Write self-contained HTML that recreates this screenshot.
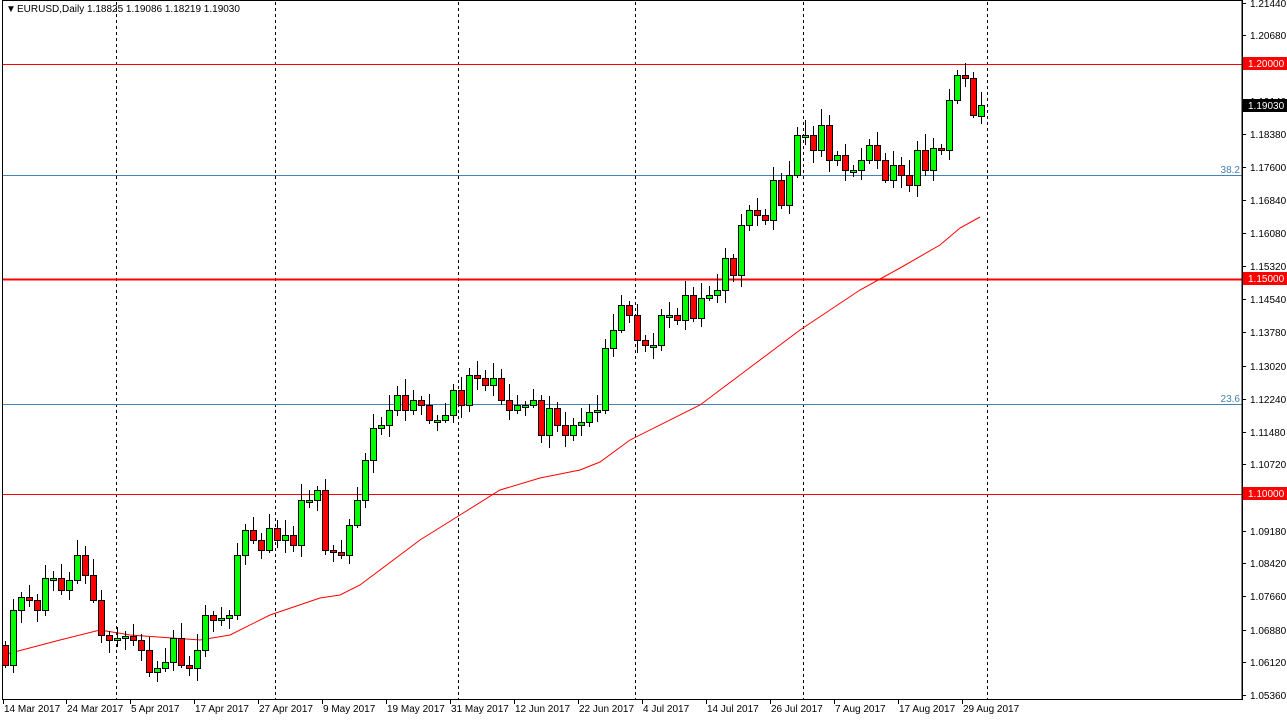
<!DOCTYPE html>
<html><head><meta charset="utf-8"><style>
html,body{margin:0;padding:0;background:#fff;width:1287px;height:720px;overflow:hidden}
svg{display:block;font-family:"Liberation Sans",sans-serif}
</style></head><body>
<svg id="c" width="1287" height="720" xmlns="http://www.w3.org/2000/svg">
<rect x="0" y="0" width="1287" height="720" fill="#fff"/>
<g id="grid" stroke="#000" stroke-dasharray="3,3" stroke-width="1">
<line x1="116.5" y1="2" x2="116.5" y2="699"/><line x1="275.5" y1="2" x2="275.5" y2="699"/><line x1="458.5" y1="2" x2="458.5" y2="699"/><line x1="635.5" y1="2" x2="635.5" y2="699"/><line x1="803.5" y1="2" x2="803.5" y2="699"/><line x1="987.5" y1="2" x2="987.5" y2="699"/>
</g>
<line x1="2" y1="175.5" x2="1242" y2="175.5" stroke="#4682b4"/>
<line x1="2" y1="404.5" x2="1242" y2="404.5" stroke="#4682b4"/>
<text x="1240" y="173" font-size="10" fill="#4682b4" text-anchor="end">38.2</text>
<text x="1240" y="402" font-size="10" fill="#4682b4" text-anchor="end">23.6</text>
<line x1="2" y1="64.5" x2="1242" y2="64.5" stroke="#f00"/>
<line x1="2" y1="279.5" x2="1242" y2="279.5" stroke="#f00" stroke-width="2"/>
<line x1="2" y1="494.5" x2="1242" y2="494.5" stroke="#f00"/>
<polyline fill="none" stroke="#f00" stroke-width="1" points="3,655 60,640 100,630 130,635 200,640 230,635 270,615 320,598 340,595 360,585 420,540 460,515 500,490 540,478 580,470 600,462 630,440 700,405 740,375 800,330 860,290 900,268 940,245 960,228 980,217"/>
<g id="candles"></g>
<rect x="2.5" y="0.5" width="1239.5" height="699" fill="none" stroke="#000"/>
<g id="axis" font-size="10" fill="#000"></g>
<text x="6" y="12" font-size="10">&#9660;</text>
<text x="17" y="12" font-size="10">EURUSD,Daily  1.18825 1.19086 1.18219 1.19030</text>
<g font-size="10" id="dates"></g>
</svg>
<script>
(function(){
var closes=[665,610,597,600,610,578,578,590,580,555,575,600,635,640,638,636,640,650,672,668,662,638,665,668,650,615,620,618,615,555,530,540,550,528,540,535,545,500,500,490,550,552,555,525,500,460,428,425,410,395,410,400,405,420,420,415,390,405,375,378,385,378,400,410,405,405,400,435,408,425,435,425,422,412,410,348,330,305,315,340,345,345,315,315,320,295,318,298,295,290,258,275,225,210,215,220,180,205,175,135,135,150,125,160,155,170,170,160,145,160,180,165,175,185,150,170,148,150,100,75,78,115,105];
var s='',prev=645;
for(var i=0;i<closes.length;i++){
 var x=5+8*i,o=prev,c=closes[i];
 if(i==closes.length-1){o=116;c=105;}
 var bt=Math.min(o,c),bb=Math.max(o,c);if(bb-bt<2)bb=bt+2;
 var hi=bt-(4+(i*7)%13),lo=bb+(3+(i*5)%11);
 var col=c>o?'#f00':'#0f0';
 s+='<line x1="'+(x+.5)+'" y1="'+hi+'" x2="'+(x+.5)+'" y2="'+lo+'" stroke="#000"/>';
 s+='<rect x="'+(x-2.5)+'" y="'+(bt+.5)+'" width="6" height="'+(bb-bt)+'" fill="'+col+'" stroke="#000"/>';
 prev=c;
}
document.getElementById('candles').innerHTML=s;
var ax=[[1.21440,3],[1.20680,35],[1.19140,101],[1.18380,134],[1.17600,167],[1.16840,200],[1.16080,233],[1.15320,266],[1.14540,299],[1.13780,332],[1.13020,366],[1.12240,399],[1.11480,432],[1.10720,464],[1.09180,531],[1.08420,563],[1.07660,596],[1.06880,630],[1.06120,662],[1.05360,695]];
var a='';
for(var j=0;j<ax.length;j++){a+='<line x1="1242" y1="'+ax[j][1]+'.5" x2="1246" y2="'+ax[j][1]+'.5" stroke="#000"/><text x="1250" y="'+(ax[j][1]+4)+'">'+ax[j][0].toFixed(5)+'</text>';}
a+='<rect x="1243" y="57" width="44" height="13" fill="#f00"/><text x="1248" y="67" fill="#fff">1.20000</text>';
a+='<rect x="1243" y="99" width="44" height="13" fill="#000"/><text x="1248" y="109" fill="#fff">1.19030</text>';
a+='<rect x="1243" y="272" width="44" height="13" fill="#f00"/><text x="1248" y="282" fill="#fff">1.15000</text>';
a+='<rect x="1243" y="487" width="44" height="13" fill="#f00"/><text x="1248" y="497" fill="#fff">1.10000</text>';
a+='<line x1="1242.5" y1="0" x2="1242.5" y2="700" stroke="#000"/>';
document.getElementById('axis').innerHTML=a;
var d=[[3,'14 Mar 2017'],[66,'24 Mar 2017'],[130,'5 Apr 2017'],[194,'17 Apr 2017'],[258,'27 Apr 2017'],[322,'9 May 2017'],[386,'19 May 2017'],[450,'31 May 2017'],[514,'12 Jun 2017'],[578,'22 Jun 2017'],[642,'4 Jul 2017'],[706,'14 Jul 2017'],[770,'26 Jul 2017'],[834,'7 Aug 2017'],[898,'17 Aug 2017'],[962,'29 Aug 2017']];
var t='';
for(var k=0;k<d.length;k++){t+='<line x1="'+(d[k][0]+.5)+'" y1="700" x2="'+(d[k][0]+.5)+'" y2="704" stroke="#000"/><text x="'+(d[k][0]+1)+'" y="712">'+d[k][1]+'</text>';}
document.getElementById('dates').innerHTML=t;
})();
</script>
</body></html>
